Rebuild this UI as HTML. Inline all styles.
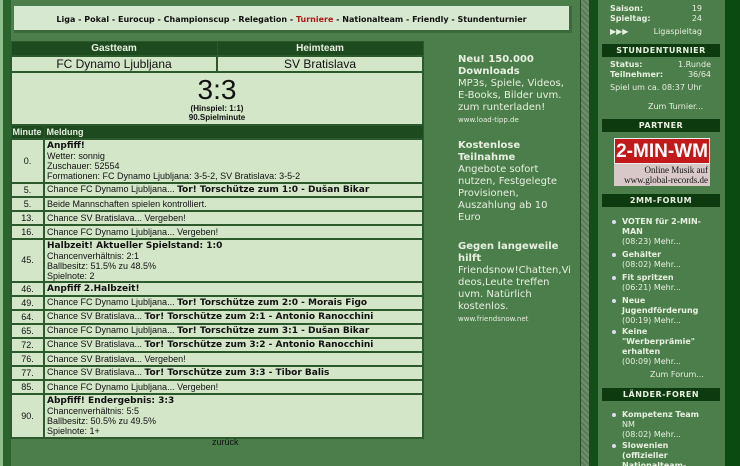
<!DOCTYPE html>
<html style="overflow:hidden;height:466px"><head><meta charset="utf-8"><style>
*{margin:0;padding:0;box-sizing:border-box}
body{width:740px;height:466px;overflow:hidden;background:#4b7e4b;font-family:"Liberation Sans",Arial,sans-serif;position:relative}
.abs{position:absolute}
#ls1{left:0;top:0;width:3px;height:466px;background:#8fbf8c}
#ls2{left:3px;top:0;width:8px;height:466px;background:#2c642e}
#nav{left:14px;top:6px;width:558px;height:27px;background:#d6e8cf;border-bottom:3px solid #3a6a3a;border-right:3px solid #3a6a3a;font:bold 8px "DejaVu Sans",sans-serif;text-align:center;line-height:27px;color:#111;white-space:nowrap}
#nav span{color:#b01818}
table{border-collapse:collapse;position:absolute;left:10px;top:41px;width:412px;font-size:9px;font-family:"Liberation Sans",sans-serif;table-layout:fixed}
td{background:#d4e6c8;border:2px solid #2d5a2d;padding:0 2px;vertical-align:middle;color:#111;line-height:10px;overflow:hidden;white-space:nowrap}
th{background:#1d4a1f;color:#e8f0e0;font-size:10px;font-weight:bold;height:14px;border:1px solid #2d5a2d}
td.m{text-align:center}
td b{font-family:"DejaVu Sans",sans-serif;font-size:9px}
.r td{height:14px}
#tex{left:580px;top:0;width:9px;height:466px;background:repeating-linear-gradient(45deg,#6f8f6c 0 2px,#5a7a58 2px 4px);border-left:1px solid #2a4a2a}
#dk1{left:589px;top:0;width:9px;height:466px;background:#134d17}
#pan{left:598px;top:0;width:127px;height:466px;overflow:hidden;background:#4b7e4b;color:#e8f0e0;font:9px "DejaVu Sans",sans-serif}
#dk2{left:725px;top:0;width:15px;height:466px;background:#0b4a10}
.h{position:absolute;left:4px;width:118px;height:13px;background:#0e3a10;color:#e8f0e0;font:bold 8px "DejaVu Sans",sans-serif;text-align:center;line-height:13px;letter-spacing:.5px}
.p{position:absolute;line-height:10px}
.mid{left:458px;color:#e8f0e0;font-family:"DejaVu Sans",sans-serif;font-size:10px;line-height:12px;width:114px;word-wrap:break-word}
.mid b{font-size:10px}
.mid small{font-size:7px}
.li{position:absolute;left:24px;width:80px;line-height:10px;font-size:8px}
.li:before{content:"";position:absolute;left:-10px;top:3px;width:4px;height:4px;border-radius:50%;background:#dde}
</style></head><body>
<div id="ls1" class="abs"></div><div id="ls2" class="abs"></div>
<div id="nav" class="abs">Liga - Pokal - Eurocup - Championscup - Relegation - <span>Turniere</span> - Nationalteam - Friendly - Stundenturnier</div>
<table>
<colgroup><col style="width:33px"><col style="width:173px"><col style="width:206px"></colgroup>
<tr><th colspan="2">Gastteam</th><th>Heimteam</th></tr>
<tr><td colspan="2" style="text-align:center;font-size:12px;height:16px;line-height:14px">FC Dynamo Ljubljana</td><td style="text-align:center;font-size:12px;line-height:14px">SV Bratislava</td></tr>
<tr><td colspan="3" style="text-align:center;height:53px;padding-top:1px"><div style="font-size:28px;line-height:28px">3:3</div><div style="font-weight:bold;font-size:8px;line-height:9px">(Hinspiel: 1:1)<br>90.Spielminute</div></td></tr>
<tr><th style="font-size:9px;text-align:left;padding-left:1px">Minute</th><th colspan="2" style="font-size:9px;text-align:left;padding-left:2px">Meldung</th></tr>
<tr><td class="m" style="height:44px">0.</td><td colspan="2"><b>Anpfiff!</b><br>Wetter: sonnig<br>Zuschauer: 52554<br>Formationen: FC Dynamo Ljubljana: 3-5-2, SV Bratislava: 3-5-2</td></tr>
<tr class="r"><td class="m">5.</td><td colspan="2">Chance FC Dynamo Ljubljana... <b>Tor! Torschütze zum 1:0 - Dušan Bikar</b></td></tr>
<tr class="r"><td class="m">5.</td><td colspan="2">Beide Mannschaften spielen kontrolliert.</td></tr>
<tr class="r"><td class="m">13.</td><td colspan="2">Chance SV Bratislava... Vergeben!</td></tr>
<tr class="r"><td class="m">16.</td><td colspan="2">Chance FC Dynamo Ljubljana... Vergeben!</td></tr>
<tr><td class="m" style="height:43px">45.</td><td colspan="2"><b>Halbzeit! Aktueller Spielstand: 1:0</b><br>Chancenverhältnis: 2:1<br>Ballbesitz: 51.5% zu 48.5%<br>Spielnote: 2</td></tr>
<tr class="r"><td class="m">46.</td><td colspan="2"><b>Anpfiff 2.Halbzeit!</b></td></tr>
<tr class="r"><td class="m">49.</td><td colspan="2">Chance FC Dynamo Ljubljana... <b>Tor! Torschütze zum 2:0 - Morais Figo</b></td></tr>
<tr class="r"><td class="m">64.</td><td colspan="2">Chance SV Bratislava... <b>Tor! Torschütze zum 2:1 - Antonio Ranocchini</b></td></tr>
<tr class="r"><td class="m">65.</td><td colspan="2">Chance FC Dynamo Ljubljana... <b>Tor! Torschütze zum 3:1 - Dušan Bikar</b></td></tr>
<tr class="r"><td class="m">72.</td><td colspan="2">Chance SV Bratislava... <b>Tor! Torschütze zum 3:2 - Antonio Ranocchini</b></td></tr>
<tr class="r"><td class="m">76.</td><td colspan="2">Chance SV Bratislava... Vergeben!</td></tr>
<tr class="r"><td class="m">77.</td><td colspan="2">Chance SV Bratislava... <b>Tor! Torschütze zum 3:3 - Tibor Balis</b></td></tr>
<tr class="r"><td class="m">85.</td><td colspan="2">Chance FC Dynamo Ljubljana... Vergeben!</td></tr>
<tr><td class="m" style="height:44px">90.</td><td colspan="2"><b>Abpfiff! Endergebnis: 3:3</b><br>Chancenverhältnis: 5:5<br>Ballbesitz: 50.5% zu 49.5%<br>Spielnote: 1+</td></tr>
</table>
<div class="abs" style="left:212px;top:437px;font-size:9px;color:#111">zurück</div>
<div class="abs mid" style="top:54px"><b>Neu! 150.000 Downloads</b><br>MP3s, Spiele, Videos, E-Books, Bilder uvm. zum runterladen!<br><small>www.load-tipp.de</small></div>
<div class="abs mid" style="top:140px"><b>Kostenlose Teilnahme</b><br>Angebote sofort nutzen, Festgelegte Provisionen, Auszahlung ab 10 Euro</div>
<div class="abs mid" style="top:241px"><b>Gegen langeweile hilft</b><br>Friendsnow!Chatten,Videos,Leute treffen uvm. Natürlich kostenlos.<br><small>www.friendsnow.net</small></div>
<div id="tex" class="abs"></div><div id="dk1" class="abs"></div>
<div id="pan" class="abs">
<div class="p" style="left:12px;top:4px;width:92px;font-weight:bold;font-size:8px">Saison:<span style="float:right;font-weight:normal">19</span><br>Spieltag:<span style="float:right;font-weight:normal">24</span></div>
<div class="p" style="left:12px;top:27px;width:92px;font-size:8px"><b>▶▶▶</b><span style="float:right">Ligaspieltag</span></div>
<div class="h" style="top:44px">STUNDENTURNIER</div>
<div class="p" style="left:12px;top:60px;width:101px;font-size:8px"><b>Status:</b><span style="float:right">1.Runde</span><br><b>Teilnehmer:</b><span style="float:right">36/64</span></div>
<div class="p" style="left:12px;top:83px;font-size:8px">Spiel um ca. 08:37 Uhr</div>
<div class="p" style="left:50px;top:102px;font-size:8px">Zum Turnier...</div>
<div class="h" style="top:119px">PARTNER</div>
<div class="abs" style="left:16px;top:138px;width:96px;height:26px;background:#c21a1a;color:#fff;font:bold 19px 'Liberation Sans',sans-serif;text-align:center;line-height:26px;border:1px solid #eee">2-MIN-WM</div>
<div class="abs" style="left:16px;top:164px;width:96px;height:22px;background:#d8c8c8;color:#111;font:9px 'Liberation Serif',serif;text-align:right;line-height:10px;padding:1px 2px">Online Musik auf<br>www.global-records.de</div>
<div class="h" style="top:194px">2MM-FORUM</div>
<div class="li" style="top:217px"><b>VOTEN für 2-MIN-MAN</b><br>(08:23) Mehr...</div>
<div class="li" style="top:250px"><b>Gehälter</b><br>(08:02) Mehr...</div>
<div class="li" style="top:273px"><b>Fit spritzen</b><br>(06:21) Mehr...</div>
<div class="li" style="top:296px"><b>Neue Jugendförderung</b><br>(00:19) Mehr...</div>
<div class="li" style="top:327px"><b>Keine "Werberprämie" erhalten</b><br>(00:09) Mehr...</div>
<div class="p" style="left:52px;top:370px;font-size:8px">Zum Forum...</div>
<div class="h" style="top:388px">LÄNDER-FOREN</div>
<div class="li" style="top:410px"><b>Kompetenz Team</b> NM<br>(08:02) Mehr...</div>
<div class="li" style="top:441px"><b>Slowenien (offizieller Nationalteam-Thm</b></div>
</div>
<div id="dk2" class="abs"></div>
</body></html>
